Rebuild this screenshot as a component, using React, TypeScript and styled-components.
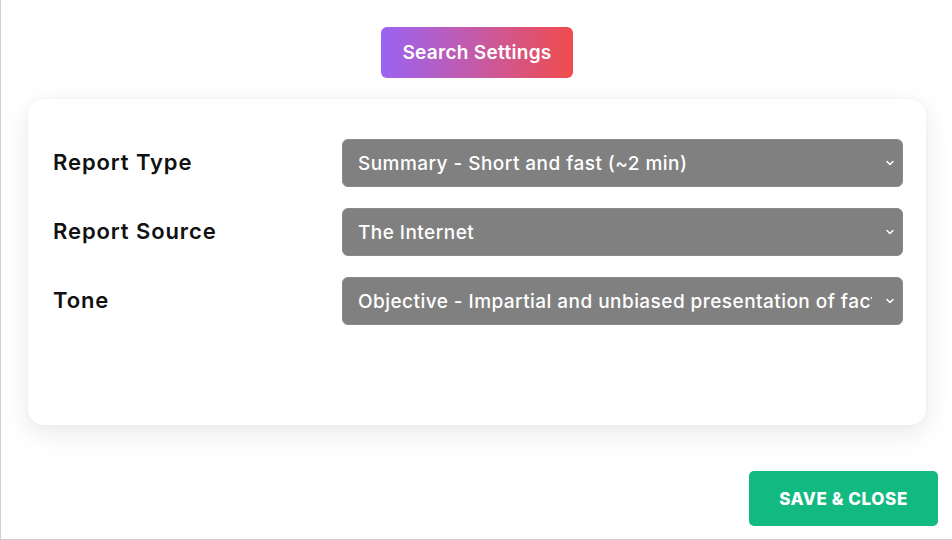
import React from "react";
import styled, { createGlobalStyle } from "styled-components";

const Global = createGlobalStyle`
  html, body { margin: 0; padding: 0; background: #ffffff; }
  * { box-sizing: border-box; }
`;

const FONT = `"Inter", "Open Sans", "Noto Sans", sans-serif`;

const Page = styled.div`
  width: 952px;
  height: 540px;
  border-left: 1px solid #cfcfcf;
  border-bottom: 1px solid #cfcfcf;
  background: #ffffff;
  display: flex;
  flex-direction: column;
  padding: 27px 26px 13px 27px;
  font-family: ${FONT};
`;

const Header = styled.div`
  display: flex;
  justify-content: center;
  margin-bottom: 21px;
`;

const TitleButton = styled.button`
  height: 51px;
  width: 192px;
  border: none;
  border-radius: 6px;
  background: linear-gradient(90deg, #9b63f2 0%, #c65aa6 50%, #f04c4c 100%);
  color: #ffffff;
  font-family: ${FONT};
  font-weight: 600;
  font-size: 19px;
  letter-spacing: 0.3px;
  padding: 0;
  cursor: pointer;
`;

const Card = styled.div`
  height: 326px;
  background: #ffffff;
  border-radius: 16px;
  box-shadow: 0 8px 28px rgba(0, 0, 0, 0.09), 0 0 6px rgba(0, 0, 0, 0.03);
  padding: 40px 23px 0 25px;
  display: flex;
  flex-direction: column;
  gap: 21px;
`;

const Row = styled.div`
  display: grid;
  grid-template-columns: 289px 1fr;
  align-items: center;
`;

const Label = styled.label`
  font-size: 22px;
  font-weight: 600;
  letter-spacing: 0.9px;
  color: #111111;
  margin-top: -2px;
`;

const SelectWrap = styled.div`
  position: relative;
  height: 48px;
`;

const Select = styled.select`
  appearance: none;
  -webkit-appearance: none;
  width: 100%;
  height: 48px;
  border: 1px solid #8a8a8a;
  border-radius: 6px;
  background: #808080;
  color: #ffffff;
  font-family: ${FONT};
  font-size: 19px;
  font-weight: 500;
  letter-spacing: 0.45px;
  padding: 0 30px 0 15px;
  outline: none;
`;

const Chevron = styled.svg`
  position: absolute;
  right: 8px;
  top: 50%;
  transform: translateY(-50%);
  pointer-events: none;
`;

const Footer = styled.div`
  margin-top: auto;
  display: flex;
  justify-content: flex-end;
  margin-right: -12px;
`;

const SaveButton = styled.button`
  width: 189px;
  height: 55px;
  border: none;
  border-radius: 5px;
  background: #12b981;
  color: #ffffff;
  font-family: ${FONT};
  font-weight: 800;
  font-size: 17px;
  letter-spacing: 0.6px;
  text-transform: uppercase;
  padding: 0;
  cursor: pointer;
`;

const fields = [
  { label: "Report Type", value: "Summary - Short and fast (~2 min)" },
  { label: "Report Source", value: "The Internet" },
  {
    label: "Tone",
    value: "Objective - Impartial and unbiased presentation of facts and findings",
  },
];

export default function App() {
  return (
    <Page>
      <Global />
      <Header>
        <TitleButton>Search Settings</TitleButton>
      </Header>
      <Card>
        {fields.map((f) => (
          <Row key={f.label}>
            <Label>{f.label}</Label>
            <SelectWrap>
              <Select defaultValue={f.value}>
                <option value={f.value}>{f.value}</option>
              </Select>
              <Chevron width="10" height="10" viewBox="0 0 10 10">
                <path
                  d="M2 3.5 L5 6.5 L8 3.5"
                  fill="none"
                  stroke="#ffffff"
                  strokeWidth="1.5"
                  strokeLinecap="round"
                  strokeLinejoin="round"
                />
              </Chevron>
            </SelectWrap>
          </Row>
        ))}
      </Card>
      <Footer>
        <SaveButton>Save &amp; Close</SaveButton>
      </Footer>
    </Page>
  );
}
